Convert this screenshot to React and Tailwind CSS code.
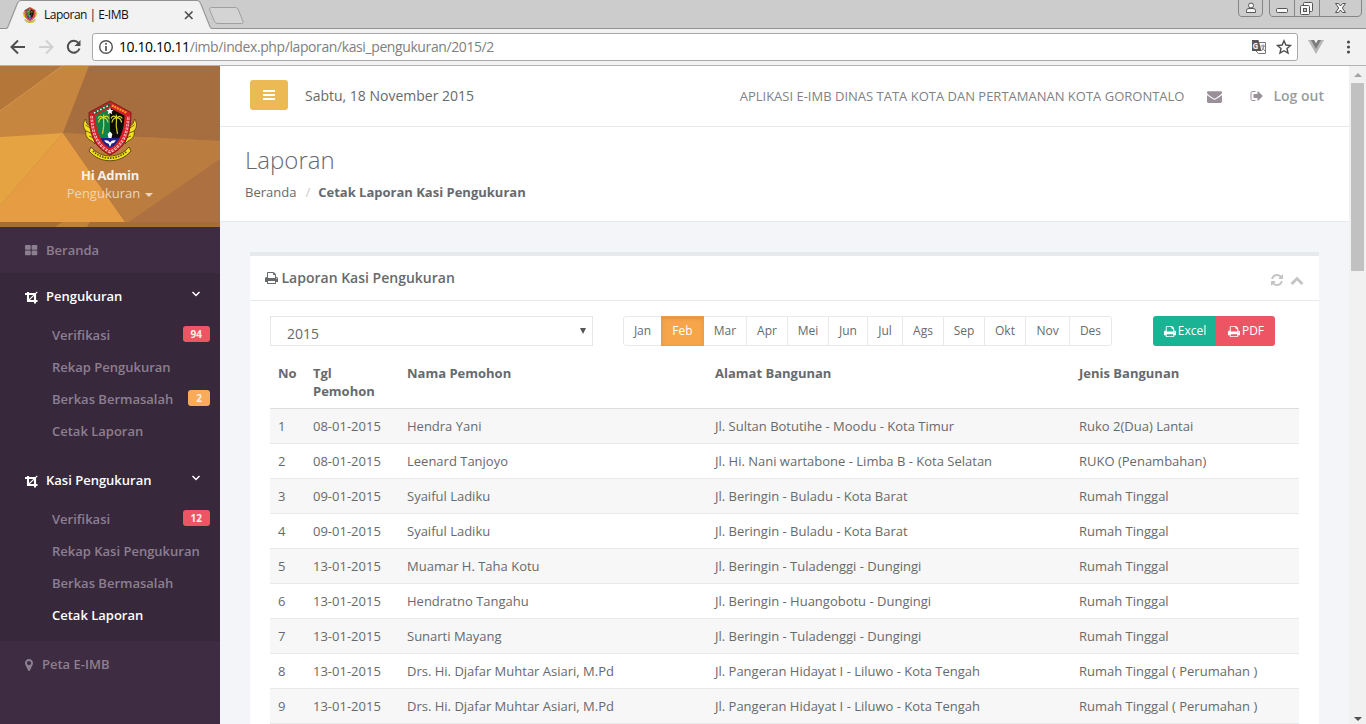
import React from "react";

const PATHS = {
  print:
    "M512 1536h896v-256h-896v256zM512 896h896v-384h-160q-40 0-68-28t-28-68v-160h-640v640zM1664 960q0-26-19-45t-45-19-45 19-19 45 19 45 45 19 45-19 19-45zM1792 960v416q0 13-9.5 22.5t-22.5 9.5h-224v160q0 40-28 68t-68 28h-960q-40 0-68-28t-28-68v-160h-224q-13 0-22.5-9.5t-9.5-22.5v-416q0-79 56.5-135.5t135.5-56.5h64v-544q0-40 28-68t68-28h672q40 0 88 20t76 48l152 152q28 28 48 76t20 88v256h64q79 0 135.5 56.5t56.5 135.5z",
  envelope:
    "M1792 710v794q0 66-47 113t-113 47h-1472q-66 0-113-47t-47-113v-794q44 49 101 87 362 246 497 345 57 42 92.5 65.5t94.5 48 110 24.5h2q51 0 110-24.5t94.5-48 92.5-65.5q170-123 498-345 57-39 100-87zM1792 416q0 79-49 151t-122 123q-376 261-468 325-10 7-42.5 31t-54 38.5-52 32.5-57.5 27-50 9h-2q-23 0-50-9t-57.5-27-52-32.5-54-38.5-42.5-31q-91-64-262-182.5t-205-142.5q-62-42-117-115.5t-55-136.5q0-78 41.5-130t118.5-52h1472q65 0 112.5 47t47.5 113z",
  signOut:
    "M704 1440q0 4 1 20t.5 26.5-3 23.5-10 19.5-20.5 6.5h-320q-119 0-203.5-84.5t-84.5-203.5v-704q0-119 84.5-203.5t203.5-84.5h320q13 0 22.5 9.5t9.5 22.5q0 4 1 20t.5 26.5-3 23.5-10 19.5-20.5 6.5h-320q-66 0-113 47t-47 113v704q0 66 47 113t113 47h312l11.5 1 11.5 3 8 5.5 7 9 2 13.5zM1632 896q0 26-19 45l-544 544q-19 19-45 19t-45-19-19-45v-288h-448q-26 0-45-19t-19-45v-384q0-26 19-45t45-19h448v-288q0-26 19-45t45-19 45 19l544 544q19 19 19 45z",
  refresh:
    "M1639 1056q0 5-1 7-64 268-268 434.5t-478 166.5q-146 0-282.5-55t-243.5-157l-129 129q-19 19-45 19t-45-19-19-45v-448q0-26 19-45t45-19h448q26 0 45 19t19 45-19 45l-137 137q71 66 161 102t187 36q134 0 250-65t186-179q11-17 53-117 8-23 30-23h192q13 0 22.5 9.5t9.5 22.5zM1664 256v448q0 26-19 45t-45 19h-448q-26 0-45-19t-19-45 19-45l138-138q-148-137-349-137-134 0-250 65t-186 179q-11 17-53 117-8 23-30 23h-199q-13 0-22.5-9.5t-9.5-22.5v-7q65-268 270-434.5t480-166.5q146 0 284 55.5t245 156.5l130-129q19-19 45-19t45 19 19 45z",
  chevronUp:
    "M1683 1331l-166 165q-19 19-45 19t-45-19l-531-531-531 531q-19 19-45 19t-45-19l-166-165q-19-19-19-45.500t19-45.500l742-741q19-19 45-19t45 19l742 741q19 19 19 45.500t-19 45.500z",
  marker:
    "M1152 640q0-106-75-181t-181-75-181 75-75 181 75 181 181 75 181-75 75-181zM1408 640q0 109-33 179l-364 774q-16 33-47.500 52t-67.500 19-67.500-19-46.500-52l-365-774q-33-70-33-179 0-212 150-362t362-150 362 150 150 362z",
};

function Icon({ name, className }) {
  return (
    <svg viewBox="0 0 1792 1792" fill="currentColor" className={className}>
      <path d={PATHS[name]} />
    </svg>
  );
}

function CropIcon() {
  return (
    <svg viewBox="0 0 13 13" className="mt-px size-[13px] shrink-0" fill="none" stroke="currentColor">
      <path d="M3 1V10H12.500M0 3H10V12.500" strokeWidth="2.100" />
      <path d="M3.500 9.500L12.300 .8" strokeWidth="1.100" />
    </svg>
  );
}

function Emblem({ className }) {
  return (
    <svg viewBox="0 0 54 62" className={className}>
      <path d="M2.500 19C-.5 23 0 28 3 31C2 35 4 39 9 41L12 44L9.500 27C5 26 3 23 2.500 19ZM51.500 19C54.500 23 54 28 51 31C52 35 50 39 45 41L42 44L44.500 27C49 26 51 23 51.500 19Z" fill="#f2e21c" stroke="#4a3510" strokeWidth=".7" />
      <path d="M2.500 25L9 29M3 31L10 34M6 36L11 38M51.500 25L45 29M51 31L44 34M48 36L43 38" stroke="#5b4710" strokeWidth=".8" />
      <path d="M8 47C18 59 36 59 46 47L48 51C37 64 17 64 6 51Z" fill="#f2e21c" stroke="#4a3510" strokeWidth=".8" />
      <path d="M10 51C20 60.500 34 60.500 44 51" stroke="#54440c" strokeWidth="1.600" strokeDasharray="1.500 1.200" fill="none" />
      <path d="M27 1L48 12.500C48 33 44 47 27 55C10 47 6 33 6 12.500Z" fill="#d51f26" stroke="#5c0d10" strokeWidth=".7" />
      <path d="M8.600 16C9.500 32 12.500 44.500 27 52C41.500 44.500 44.500 32 45.400 16" stroke="#f7d5d5" strokeWidth="2.500" strokeDasharray="2.400 1" fill="none" />
      <path d="M8.600 16C9.500 32 12.500 44.500 27 52C41.500 44.500 44.500 32 45.400 16" stroke="#d51f26" strokeWidth=".7" fill="none" />
      <path d="M10 13.500L27 4.500" stroke="#176b3a" strokeWidth="2.800" />
      <path d="M11 13L26 5.200" stroke="#fff" strokeWidth="1.500" strokeDasharray="1.500 2" />
      <path d="M29 5.500L44 13" stroke="#f4a21c" strokeWidth="2" strokeDasharray="2 .8" />
      <path d="M27 8L12.500 15.500C13 27 15 36 20 41H27Z" fill="#11824a" />
      <path d="M27 8L41.500 15.500C41 27 39 36 34 41H27Z" fill="#0b0b0b" />
      <path d="M17.500 38H36.500C34 43.500 31 46 27 48C23 46 20 43.500 17.500 38Z" fill="#20208c" />
      <path d="M27 7.500L28 10L30.500 10.200L28.600 11.800L29.200 14.200L27 12.900L24.800 14.200L25.400 11.800L23.500 10.200L26 10Z" fill="#fff" />
      <path d="M20.500 18Q21.500 26 19.500 34M33.500 18Q32.500 26 34.500 34" stroke="#d9cf2a" strokeWidth="1.200" fill="none" />
      <path d="M20.500 18Q17 14.500 14.800 18.500M20.500 18Q24 14 26 18.500M20.500 18Q16.500 17.500 15.500 22.500M20.500 18Q24.500 18 25 22.500M20.500 18L20.800 14.500M33.500 18Q30 14 28 18.500M33.500 18Q37 14.500 39.300 18.500M33.500 18Q29.500 18 29 22.500M33.500 18Q37.500 17.500 38.600 22.500M33.500 18L33.200 14.500" stroke="#d9d42a" strokeWidth="1.200" fill="none" />
      <path d="M27 31.500L29.300 34L28.500 38H25.500L24.700 34Z" fill="#fff" />
      <path d="M21 40.500Q25 39.500 27 42.500Q29 39.500 33 40.500Q31 43.500 28.500 43.500L27 47L25.500 43.500Q23 43.500 21 40.500Z" fill="#fff" />
    </svg>
  );
}

function BrowserTabs() {
  return (
    <div className="relative flex h-[29px] shrink-0 items-start bg-[#cccccc]">
      <svg className="absolute inset-0" width="1366" height="29" fill="none">
        <path d="M0 28.500H5.500C8 28.500 8 26 9 24L17 4Q18 .5 21 .5H197Q200 .5 201 4L209 24C210 27 211 28.500 213 28.500H1366V29H0Z" fill="none" stroke="#919191" />
        <path d="M7 29C9 28 9 26 10 24L18 4Q19 1 21 1H197Q199 1 200 4L208 24C209 27 210 29 212 29Z" fill="#f2f2f2" />
        <path d="M211.500 7.500H235Q237 7.500 238 9L243 21.500Q243.500 23.500 241.500 23.500H218Q215.500 23.500 214.500 21.500L209.500 9.500Q209 7.500 211.500 7.500Z" fill="#d4d4d4" stroke="#a0a0a0" />
        <path d="M185 11.500L192.500 19M192.500 11.500L185 19" stroke="#505050" strokeWidth="1.700" />
        <path d="M1238.500 0V12Q1238.500 16.500 1242 16.500H1258.500Q1262.500 16.500 1262.500 12V0M1269.500 0V12Q1269.500 16.500 1273 16.500H1357Q1361.500 16.500 1361.500 12V0M1294.500 0V16M1319.500 0V16" stroke="#858585" />
        <g stroke="#555" fill="#f8f8f8">
          <circle cx="1251" cy="5.500" r="2.500" />
          <path d="M1246.500 12.500V10.500Q1246.500 8.500 1249 8.500H1253Q1255.500 8.500 1255.500 10.500V12.500Z" />
          <rect x="1276.500" y="8.500" width="11" height="4" rx="1" />
          <rect x="1303.500" y="2.500" width="9" height="9" rx="1" />
          <rect x="1300.500" y="5.500" width="9" height="9" rx="1" />
          <rect x="1303.500" y="8.500" width="3" height="3" fill="#ccc" />
          <path d="M1335.500 3.500H1338.500L1340.500 6L1342.500 3.500H1345.500L1342.300 8L1345.500 12.500H1342.500L1340.500 10L1338.500 12.500H1335.500L1338.700 8Z" />
        </g>
      </svg>
      <div className="relative flex h-[29px] items-center gap-[6px] pl-[22px]">
        <Emblem className="h-[16px] w-[16px]" />
        <span className="mt-px text-[12px] tracking-[-0.5px] text-[#111]">Laporan | E-IMB</span>
      </div>
    </div>
  );
}

function AddressBar() {
  return (
    <div className="flex h-[37px] shrink-0 items-center border-b border-[#b4b4b4] bg-[#f2f2f2]">
      <svg width="92" height="36" className="shrink-0" fill="none" strokeWidth="2">
        <path d="M25 18H12M18 11.500L11.500 18L18 24.500" stroke="#4e4e4e" />
        <path d="M39 18H52M46 11.500L52.500 18L46 24.500" stroke="#d0d0d0" />
        <path d="M78.500 14A6 6 0 1 0 79.500 19.500" stroke="#4e4e4e" />
        <path d="M80.500 11V17H74.500Z" fill="#4e4e4e" />
      </svg>
      <div className="flex h-[28px] w-[1206px] shrink-0 items-center rounded-[3px] border border-[#a9a9a9] bg-white">
        <svg width="26" height="26" className="shrink-0" fill="none">
          <circle cx="13" cy="13" r="6.300" stroke="#555" strokeWidth="1.400" />
          <path d="M13 12V17M13 9V10.700" stroke="#555" strokeWidth="1.700" />
        </svg>
        <span className="mt-[-1px] text-[14px] tracking-[-0.4px] text-[#808080]">
          <span className="text-black">10.10.10.11</span>/imb/index.php/laporan/kasi_pengukuran/2015/2
        </span>
        <svg width="50" height="26" className="ml-auto shrink-0" fill="none">
          <path d="M12 8.500H18.500V19.500H11.500L9 17" fill="#fff" stroke="#777" />
          <path d="M5 6H11.500L14.500 17H5Z" fill="#555" />
          <text x="5.500" y="14.500" fontSize="8" fontWeight="700" fill="#eee">G</text>
          <path d="M13.500 12H18M16 10.500V12M17 12Q16.500 15 14.500 17M15 13.500L18 17" stroke="#777" strokeWidth=".9" />
          <path d="M37 6.800L38.900 11L43.500 11.500L40 14.500L41 19L37 16.700L33 19L34 14.500L30.500 11.500L35.100 11Z" stroke="#4e4e4e" strokeWidth="1.400" />
        </svg>
      </div>
      <svg width="68" height="36" className="shrink-0">
        <path d="M10 11H16L18 14.500L20 11H26L18 25Z" fill="#b5b5b5" />
        <path d="M13 11H16L18 14.500L20 11H23L18 20Z" fill="#7c7c7c" />
        <circle cx="50.500" cy="13" r="1.600" fill="#4e4e4e" />
        <circle cx="50.500" cy="18" r="1.600" fill="#4e4e4e" />
        <circle cx="50.500" cy="23" r="1.600" fill="#4e4e4e" />
      </svg>
    </div>
  );
}

function Profile() {
  return (
    <div className="relative flex h-[161px] shrink-0 flex-col items-center pt-[34px]">
      <svg className="absolute inset-0" width="220" height="161">
        <rect width="220" height="161" fill="#b97b3d" />
        <path d="M0 0H62L0 45Z" fill="#b5763a" />
        <path d="M62 0H89L63 67L0 71V45Z" fill="#c6863f" />
        <path d="M89 0H220V75L63 67Z" fill="#a66d3e" />
        <path d="M0 71L63 67L0 140Z" fill="#e5a341" />
        <path d="M63 67L125 156H0V140Z" fill="#e69c42" />
        <path d="M63 67L220 75V93L129 156H125Z" fill="#ba7c3f" />
        <path d="M220 93V156H129Z" fill="#ad7040" />
        <path d="M0 45L62 0" stroke="#d99b50" strokeWidth=".8" />
        <path d="M0 156H220V161H0Z" fill="#a86b3a" />
        <path d="M62 156H90L87 161H55Z" fill="#c08040" />
      </svg>
      <Emblem className="relative h-[62px] w-[54px]" />
      <div className="relative mt-[4px] text-[13px] font-bold leading-[18px] tracking-[-0.2px] text-[#f8f0e8]">Hi Admin</div>
      <div className="relative flex items-center gap-[5px] text-[13px] leading-[18px] text-[#ecd5bd]">
        Pengukuran
        <span className="mt-[3px] border-x-4 border-t-4 border-x-transparent border-t-current" />
      </div>
    </div>
  );
}

function Badge({ text, color }) {
  return (
    <span className={"mt-[-4px] flex h-[16px] items-center rounded-[3px] px-[8px] text-[10px] font-bold text-[#fbeeee] " + color}>
      {text}
    </span>
  );
}

function Group({ title, items }) {
  return (
    <div className="h-[184px] shrink-0 bg-[#38283c] pt-px">
      <div className="flex h-[46px] items-center gap-[8px] pl-[25px] pr-[19px] text-white">
        <CropIcon />
        <span className="text-[13px] font-semibold">{title}</span>
        <svg width="10" height="8" className="mt-[-6px] ml-auto" fill="none" stroke="currentColor" strokeWidth="1.500">
          <path d="M1.500 2L5 5.500L8.500 2" />
        </svg>
      </div>
      {items.map((it) => (
        <div key={it.label} className={"flex h-[32px] items-center justify-between pl-[52px] pr-[10px] text-[13px] font-semibold " + (it.active ? "text-white" : "text-[#8c7f90]")}>
          <span>{it.label}</span>
          {it.badge && <Badge text={it.badge} color={it.color} />}
        </div>
      ))}
    </div>
  );
}

function Sidebar() {
  return (
    <aside className="flex w-[220px] shrink-0 flex-col bg-[#3e2c42] text-[#8c7f90]">
      <Profile />
      <div className="flex h-[46px] shrink-0 items-center gap-[8px] pl-[25px] pt-px text-[13px] font-semibold">
        <svg width="13" height="13" className="mt-[-1px]" fill="currentColor">
          <rect x="0" y="1" width="5.700" height="4.700" rx=".8" />
          <rect x="6.600" y="1" width="5.700" height="4.700" rx=".8" />
          <rect x="0" y="6.600" width="5.700" height="4.700" rx=".8" />
          <rect x="6.600" y="6.600" width="5.700" height="4.700" rx=".8" />
        </svg>
        Beranda
      </div>
      <Group
        title="Pengukuran"
        items={[
          { label: "Verifikasi", badge: "94", color: "bg-[#ed5565]" },
          { label: "Rekap Pengukuran" },
          { label: "Berkas Bermasalah", badge: "2", color: "bg-[#f8ac59]" },
          { label: "Cetak Laporan" },
        ]}
      />
      <Group
        title="Kasi Pengukuran"
        items={[
          { label: "Verifikasi", badge: "12", color: "bg-[#ed5565]" },
          { label: "Rekap Kasi Pengukuran" },
          { label: "Berkas Bermasalah" },
          { label: "Cetak Laporan", active: true },
        ]}
      />
      <div className="flex h-[46px] shrink-0 items-center gap-[6px] pl-[22px] pt-px text-[13px] font-semibold">
        <Icon name="marker" className="size-[14px]" />
        Peta E-IMB
      </div>
    </aside>
  );
}

const MONTHS = [
  ["Jan", "w-[37px]"],
  ["Feb", "w-[43px]"],
  ["Mar", "w-[42px]"],
  ["Apr", "w-[41px]"],
  ["Mei", "w-[41px]"],
  ["Jun", "w-[39px]"],
  ["Jul", "w-[35px]"],
  ["Ags", "w-[41px]"],
  ["Sep", "w-[41px]"],
  ["Okt", "w-[41px]"],
  ["Nov", "w-[44px]"],
  ["Des", "w-[42px]"],
];

const ROWS = [
  ["08-01-2015", "Hendra Yani", "Jl. Sultan Botutihe - Moodu - Kota Timur", "Ruko 2(Dua) Lantai"],
  ["08-01-2015", "Leenard Tanjoyo", "Jl. Hi. Nani wartabone - Limba B - Kota Selatan", "RUKO (Penambahan)"],
  ["09-01-2015", "Syaiful Ladiku", "Jl. Beringin - Buladu - Kota Barat", "Rumah Tinggal"],
  ["09-01-2015", "Syaiful Ladiku", "Jl. Beringin - Buladu - Kota Barat", "Rumah Tinggal"],
  ["13-01-2015", "Muamar H. Taha Kotu", "Jl. Beringin - Tuladenggi - Dungingi", "Rumah Tinggal"],
  ["13-01-2015", "Hendratno Tangahu", "Jl. Beringin - Huangobotu - Dungingi", "Rumah Tinggal"],
  ["13-01-2015", "Sunarti Mayang", "Jl. Beringin - Tuladenggi - Dungingi", "Rumah Tinggal"],
  ["13-01-2015", "Drs. Hi. Djafar Muhtar Asiari, M.Pd", "Jl. Pangeran Hidayat I - Liluwo - Kota Tengah", "Rumah Tinggal ( Perumahan )"],
  ["13-01-2015", "Drs. Hi. Djafar Muhtar Asiari, M.Pd", "Jl. Pangeran Hidayat I - Liluwo - Kota Tengah", "Rumah Tinggal ( Perumahan )"],
];

const COLS = "grid grid-cols-[35px_94px_308px_364px_228px] *:pl-[8px]";

function Report() {
  return (
    <section className="mx-[30px] mt-[30px] w-[1069px] border-t-4 border-[#e7eaec] bg-white">
      <div className="flex h-[45px] items-center border-b border-[#e7eaec] pl-[14px] pr-[15px] pb-[2px]">
        <Icon name="print" className="mt-px size-[14px]" />
        <h5 className="ml-[3.5px] text-[14px] font-semibold">Laporan Kasi Pengukuran</h5>
        <div className="mt-[5px] ml-auto flex items-center gap-[6px] text-[#c4c4c4]">
          <Icon name="refresh" className="size-[14px]" />
          <Icon name="chevronUp" className="size-[14px]" />
        </div>
      </div>
      <div className="px-[20px] pt-[15px]">
        <div className="flex h-[30px]">
          <div className="flex w-[323px] items-center justify-between border border-[#e5e6e7] pl-[16px] pr-[6px]">
            <span className="mt-[5px] text-[14px]">2015</span>
            <span className="mt-[-1px] border-x-[3.5px] border-t-[6px] border-x-transparent border-t-[#555]" />
          </div>
          <div className="ml-[30px] flex rounded-[3px] border border-[#e7eaec] text-[12px]">
            {MONTHS.map(([m, w], i) => (
              <div
                key={m}
                className={
                  "flex items-center justify-center " + w + " " +
                  (i === 1
                    ? "my-[-1px] bg-[#f7a54a] text-white shadow-[inset_0_2px_4px_rgba(0,0,0,0.15)] ring-1 ring-inset ring-[#f09c40]"
                    : i > 2 ? "border-l border-[#e7eaec]" : "")
                }
              >
                {m}
              </div>
            ))}
          </div>
          <div className="ml-[41px] flex text-[12px] text-white">
            <div className="flex w-[63px] items-center justify-center gap-[2px] rounded-l-[3px] bg-[#1ab394]">
              <Icon name="print" className="size-[13px]" />
              Excel
            </div>
            <div className="flex w-[59px] items-center justify-center gap-[2px] rounded-r-[3px] bg-[#ed5565]">
              <Icon name="print" className="size-[13px]" />
              PDF
            </div>
          </div>
        </div>
        <div className="mt-[10px]">
          <div className={COLS + " h-[53px] border-b border-[#dddddd] pt-[8px] font-bold leading-[18px]"}>
            <div>No</div>
            <div>Tgl<br />Pemohon</div>
            <div>Nama Pemohon</div>
            <div>Alamat Bangunan</div>
            <div>Jenis Bangunan</div>
          </div>
          {ROWS.map((r, i) => (
            <div key={i} className={COLS + " h-[35px] items-center whitespace-nowrap border-b border-[#e7eaec] pt-[2px] " + (i % 2 ? "" : "bg-[#f7f7f7]")}>
              <div>{i + 1}</div>
              {r.map((c, j) => (
                <div key={j}>{c}</div>
              ))}
            </div>
          ))}
        </div>
      </div>
    </section>
  );
}

export default function App() {
  return (
    <div className="flex h-[724px] w-[1366px] flex-col overflow-hidden font-['Open_Sans','Noto_Sans',sans-serif]">
      <BrowserTabs />
      <AddressBar />
      <div className="flex min-h-0 flex-1 overflow-hidden text-[13px] text-[#676a6c]">
        <Sidebar />
        <main className="w-[1129px] shrink-0 bg-[#f3f5f9]">
          <div className="flex h-[61px] items-center border-b border-[#e7eaec] bg-white pl-[30px] pr-[25px]">
            <div className="mt-[-2px] flex h-[30px] w-[38px] items-center justify-center rounded-[3px] bg-[#ebba54]">
              <svg width="12" height="10" fill="#fff">
                <rect width="12" height="2" />
                <rect y="4" width="12" height="2" />
                <rect y="8" width="12" height="2" />
              </svg>
            </div>
            <span className="mt-[-2px] ml-[17px] text-[14px]">Sabtu, 18 November 2015</span>
            <span className="mt-[2px] ml-auto text-[13px] text-[#808284]">APLIKASI E-IMB DINAS TATA KOTA DAN PERTAMANAN KOTA GORONTALO</span>
            <Icon name="envelope" className="ml-[23px] size-[15px] text-[#999099]" />
            <Icon name="signOut" className="ml-[28px] size-[14px] text-[#999099]" />
            <span className="mt-[-2px] ml-[9px] text-[14px] font-semibold text-[#999c9e]">Log out</span>
          </div>
          <div className="h-[95px] border-b border-[#e7eaec] bg-white pl-[25px] pt-[18px]">
            <h2 className="text-[24px] font-light leading-[30px]">Laporan</h2>
            <div className="mt-[8px] flex leading-[18px]">
              <span>Beranda</span>
              <span className="pl-[9px] pr-[8px] text-[#ccc]">/</span>
              <span className="font-bold">Cetak Laporan Kasi Pengukuran</span>
            </div>
          </div>
          <div className="h-px bg-[#f3f5f9] mb-[-1px]" />
          <Report />
        </main>
        <div className="flex w-[17px] shrink-0 flex-col items-center bg-[#f1f1f1]">
          <div className="flex h-[17px] items-center">
            <span className="border-x-4 border-b-4 border-x-transparent border-b-[#a3a3a3]" />
          </div>
          <div className="h-[188px] w-[13px] bg-[#c1c1c1]" />
          <div className="mt-auto mb-[3px] border-x-4 border-t-4 border-x-transparent border-t-[#505050]" />
        </div>
      </div>
    </div>
  );
}
